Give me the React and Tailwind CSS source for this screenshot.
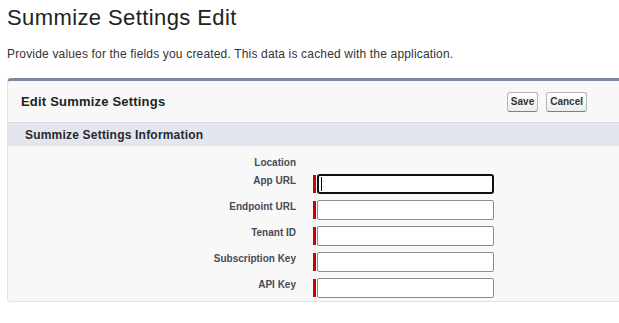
import React from "react";

const fields = ["App URL", "Endpoint URL", "Tenant ID", "Subscription Key", "API Key"];

const Button = ({ children }) => (
  <button
    type="button"
    className="h-[20px] px-[3px] rounded-[3px] border border-[#b5b5b5] border-b-[#7f7f7f] bg-gradient-to-b from-white to-[#ededed] text-[10px] font-bold leading-[16px] text-[#333]"
  >
    {children}
  </button>
);

const FieldRow = ({ label, focused }) => (
  <div className="flex items-start h-[20px]">
    <label className="w-[288px] shrink-0 text-right text-[10px] font-bold leading-[13px] text-[#4a4a56]">
      {label}
    </label>
    {/* required marker */}
    <div className="ml-[17px] mt-[1px] w-[3px] h-[18px] bg-[#c00]" />
    <div className="relative ml-[1px]">
      {focused ? (
        <>
          <input
            type="text"
            className="block w-[177px] h-[20px] rounded-[3px] border-2 border-[#111] bg-white outline-none"
          />
          <span className="absolute left-[4px] top-[3px] h-[14px] w-px bg-black" />
        </>
      ) : (
        <input
          type="text"
          className="block w-[177px] h-[20px] rounded-[2px] border border-[#8c8c8c] bg-white outline-none"
        />
      )}
    </div>
  </div>
);

const App = () => {
  return (
    <div className="min-h-screen bg-white overflow-hidden pl-[7px] pt-[5px] font-['Liberation_Sans',Arial,sans-serif]">
      <h1 className="text-[22px] leading-[26px] tracking-[0.4px] text-[#222]">Summize Settings Edit</h1>
      <p className="mt-[15px] text-[12px] leading-[16px] tracking-[0.17px] text-[#333]">
        Provide values for the fields you created. This data is cached with the application.
      </p>

      <div className="mt-[16px] w-[620px] rounded-[4px] border border-[#e0e3e5] border-t-[3px] border-t-[#7d8aa3] bg-[#f8f8f8]">
        {/* header */}
        <div className="flex items-center justify-between h-[42px] pl-[13px] pr-[39px] border-b border-[#dbdbdb]">
          <h2 className="text-[13px] font-bold tracking-[0.2px] text-[#222]">Edit Summize Settings</h2>
          <div className="flex gap-[8px]">
            <Button>Save</Button>
            <Button>Cancel</Button>
          </div>
        </div>

        {/* section */}
        <div className="flex items-center h-[23px] pl-[17px] bg-[#e3e6ef]">
          <h3 className="text-[12px] font-bold tracking-[0.2px] text-[#27282e]">Summize Settings Information</h3>
        </div>

        <div className="pt-[10px] pb-[3px] flex flex-col gap-[6px]">
          <div className="flex items-start h-[12px]">
            <span className="w-[288px] text-right text-[10px] font-bold leading-[13px] text-[#4a4a56]">Location</span>
          </div>
          {fields.map((f, i) => (
            <FieldRow key={f} label={f} focused={i === 0} />
          ))}
        </div>
      </div>
    </div>
  );
};

export default App;
